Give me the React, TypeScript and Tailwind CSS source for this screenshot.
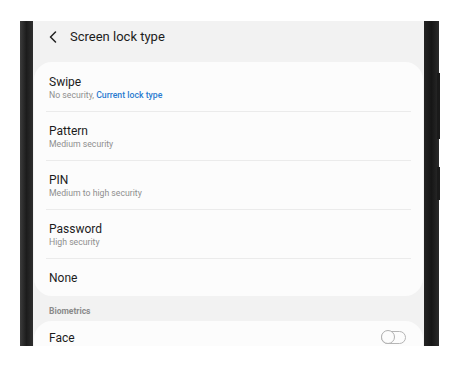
import React from 'react';

const font = { fontFamily: 'Roboto, "Noto Sans", sans-serif' };

type Option = { title: string; sub?: React.ReactNode };

const options: Option[] = [
  {
    title: 'Swipe',
    sub: (
      <>
        No security, <span className="text-[#2a7bd0] font-medium">Current lock type</span>
      </>
    ),
  },
  { title: 'Pattern', sub: 'Medium security' },
  { title: 'PIN', sub: 'Medium to high security' },
  { title: 'Password', sub: 'High security' },
  { title: 'None' },
];

function Row({ opt, first, last }: { opt: Option; first: boolean; last: boolean }) {
  return (
    <div className="px-[12px]">
      <div
        className={`px-[3px] ${first ? 'pt-[13px]' : 'pt-[12px]'} ${
          last ? 'pb-[11px]' : 'pb-[10px] border-b border-[#ebebeb]'
        }`}
      >
        <div className="text-[12px] leading-[14px] text-[#1c1c1c]">{opt.title}</div>
        {opt.sub && <div className="mt-[1px] text-[8.7px] leading-[11px] text-[#8f8f8f]">{opt.sub}</div>}
      </div>
    </div>
  );
}

export default function App() {
  return (
    <div className="w-[460px] h-[365px] bg-white overflow-hidden" style={font}>
      <div className="pt-[21px] pl-[20px] flex">
        {/* left bezel */}
        <div className="w-[13px] h-[325px] bg-gradient-to-r from-[#3c3c3c] via-[#1c1c1c] to-[#2e2e2e]" />

        {/* screen */}
        <div className="w-[391px] h-[325px] bg-[#f2f2f2] overflow-hidden">
          <div className="h-[41px] flex items-start pt-[8px] pl-[16px] gap-[13px]">
            <svg width="8" height="12" viewBox="0 0 8 12" fill="none" className="mt-[2px]">
              <path d="M6.5 1 L1.5 6 L6.5 11" stroke="#222" strokeWidth="1.5" strokeLinecap="round" strokeLinejoin="round" />
            </svg>
            <span className="text-[13px] leading-[16px] text-[#1c1c1c]">Screen lock type</span>
          </div>

          <div className="mx-[1px] bg-[#fcfcfc] rounded-[18px] overflow-hidden">
            {options.map((o, i) => (
              <Row key={o.title} opt={o} first={i === 0} last={i === options.length - 1} />
            ))}
          </div>

          <div className="h-[25px] pt-[9px] pl-[16px] text-[8.5px] leading-[12px] font-bold text-[#8a8a8a]">
            Biometrics
          </div>

          <div className="mx-[1px] bg-[#fcfcfc] rounded-t-[18px] h-[40px] flex items-start justify-between pl-[15px] pr-[17px] pt-[10px]">
            <span className="text-[12px] leading-[14px] text-[#1c1c1c]">Face</span>
            <div className="relative w-[25px] h-[13px] rounded-full border-[1.5px] border-[#b5b5b5]">
              <div className="absolute left-[-1.5px] top-[-2px] w-[14px] h-[14px] rounded-full border-[1.5px] border-[#b0b0b0] bg-[#fcfcfc]" />
            </div>
          </div>
        </div>

        {/* right bezel */}
        <div className="relative w-[15px] h-[325px] bg-gradient-to-r from-[#242424] via-[#161616] to-[#2a2a2a]">
          <div className="absolute right-[-1px] top-[52px] w-[3px] h-[66px] bg-[#1a1a1a]" />
          <div className="absolute right-[-1px] top-[146px] w-[3px] h-[33px] bg-[#1a1a1a]" />
        </div>
      </div>
    </div>
  );
}
